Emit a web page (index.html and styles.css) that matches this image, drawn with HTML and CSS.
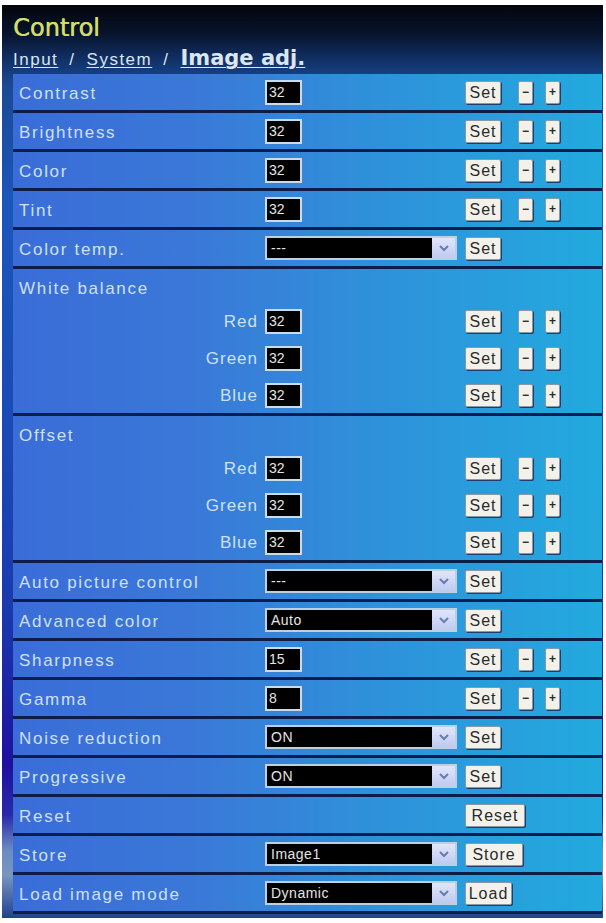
FILE: index.html
```html
<!DOCTYPE html>
<html>
<head>
<meta charset="utf-8">
<link rel="stylesheet" href="styles.css">
</head>
<body>
<div class="page">
  <header class="head">
    <h1 class="title">Control</h1>
    <nav class="crumbs"><a class="crumb">Input</a><span class="sep">/</span><a class="crumb">System</a><span class="sep">/</span><a class="crumb current">Image adj.</a></nav>
  </header>
  <div class="table">
    <div class="row"><span class="label">Contrast</span><span class="field"><span class="num">32</span></span><span class="btns"><span class="btn set">Set</span><span class="btn step">−</span><span class="btn step">+</span></span></div>
    <div class="row"><span class="label">Brightness</span><span class="field"><span class="num">32</span></span><span class="btns"><span class="btn set">Set</span><span class="btn step">−</span><span class="btn step">+</span></span></div>
    <div class="row"><span class="label">Color</span><span class="field"><span class="num">32</span></span><span class="btns"><span class="btn set">Set</span><span class="btn step">−</span><span class="btn step">+</span></span></div>
    <div class="row"><span class="label">Tint</span><span class="field"><span class="num">32</span></span><span class="btns"><span class="btn set">Set</span><span class="btn step">−</span><span class="btn step">+</span></span></div>
    <div class="row"><span class="label">Color temp.</span><span class="field"><span class="select"><span class="sel-val">---</span><span class="sel-arrow"><svg width="10" height="7" viewBox="0 0 10 7"><polyline points="1,1 5,5 9,1" fill="none" stroke="#6a7cae" stroke-width="2"/></svg></span></span></span><span class="btns"><span class="btn set">Set</span></span></div>
    <div class="group">
      <div class="group-head">White balance</div>
      <div class="subrow"><span class="sublabel">Red</span><span class="field"><span class="num">32</span></span><span class="btns"><span class="btn set">Set</span><span class="btn step">−</span><span class="btn step">+</span></span></div>
      <div class="subrow"><span class="sublabel">Green</span><span class="field"><span class="num">32</span></span><span class="btns"><span class="btn set">Set</span><span class="btn step">−</span><span class="btn step">+</span></span></div>
      <div class="subrow"><span class="sublabel">Blue</span><span class="field"><span class="num">32</span></span><span class="btns"><span class="btn set">Set</span><span class="btn step">−</span><span class="btn step">+</span></span></div>
    </div>
    <div class="group">
      <div class="group-head">Offset</div>
      <div class="subrow"><span class="sublabel">Red</span><span class="field"><span class="num">32</span></span><span class="btns"><span class="btn set">Set</span><span class="btn step">−</span><span class="btn step">+</span></span></div>
      <div class="subrow"><span class="sublabel">Green</span><span class="field"><span class="num">32</span></span><span class="btns"><span class="btn set">Set</span><span class="btn step">−</span><span class="btn step">+</span></span></div>
      <div class="subrow"><span class="sublabel">Blue</span><span class="field"><span class="num">32</span></span><span class="btns"><span class="btn set">Set</span><span class="btn step">−</span><span class="btn step">+</span></span></div>
    </div>
    <div class="row"><span class="label">Auto picture control</span><span class="field"><span class="select"><span class="sel-val">---</span><span class="sel-arrow"><svg width="10" height="7" viewBox="0 0 10 7"><polyline points="1,1 5,5 9,1" fill="none" stroke="#6a7cae" stroke-width="2"/></svg></span></span></span><span class="btns"><span class="btn set">Set</span></span></div>
    <div class="row"><span class="label">Advanced color</span><span class="field"><span class="select"><span class="sel-val">Auto</span><span class="sel-arrow"><svg width="10" height="7" viewBox="0 0 10 7"><polyline points="1,1 5,5 9,1" fill="none" stroke="#6a7cae" stroke-width="2"/></svg></span></span></span><span class="btns"><span class="btn set">Set</span></span></div>
    <div class="row"><span class="label">Sharpness</span><span class="field"><span class="num">15</span></span><span class="btns"><span class="btn set">Set</span><span class="btn step">−</span><span class="btn step">+</span></span></div>
    <div class="row"><span class="label">Gamma</span><span class="field"><span class="num">8</span></span><span class="btns"><span class="btn set">Set</span><span class="btn step">−</span><span class="btn step">+</span></span></div>
    <div class="row"><span class="label">Noise reduction</span><span class="field"><span class="select"><span class="sel-val">ON</span><span class="sel-arrow"><svg width="10" height="7" viewBox="0 0 10 7"><polyline points="1,1 5,5 9,1" fill="none" stroke="#6a7cae" stroke-width="2"/></svg></span></span></span><span class="btns"><span class="btn set">Set</span></span></div>
    <div class="row"><span class="label">Progressive</span><span class="field"><span class="select"><span class="sel-val">ON</span><span class="sel-arrow"><svg width="10" height="7" viewBox="0 0 10 7"><polyline points="1,1 5,5 9,1" fill="none" stroke="#6a7cae" stroke-width="2"/></svg></span></span></span><span class="btns"><span class="btn set">Set</span></span></div>
    <div class="row"><span class="label">Reset</span><span class="field"></span><span class="btns"><span class="btn reset">Reset</span></span></div>
    <div class="row"><span class="label">Store</span><span class="field"><span class="select"><span class="sel-val">Image1</span><span class="sel-arrow"><svg width="10" height="7" viewBox="0 0 10 7"><polyline points="1,1 5,5 9,1" fill="none" stroke="#6a7cae" stroke-width="2"/></svg></span></span></span><span class="btns"><span class="btn store">Store</span></span></div>
    <div class="row"><span class="label">Load image mode</span><span class="field"><span class="select"><span class="sel-val">Dynamic</span><span class="sel-arrow"><svg width="10" height="7" viewBox="0 0 10 7"><polyline points="1,1 5,5 9,1" fill="none" stroke="#6a7cae" stroke-width="2"/></svg></span></span></span><span class="btns"><span class="btn load">Load</span></span></div>
  </div>
</div>
</body>
</html>
```

FILE: styles.css
```css
html, body {
  margin: 0;
  padding: 0;
  background: #ffffff;
}

.page {
  margin: 5px 3px 0 2px;
  width: 601px;
  padding-bottom: 4px;
  background: linear-gradient(to bottom,
    #03050c 0px,
    #08152e 30px,
    #133672 60px,
    #1a4a94 80px,
    #1c56bc 200px,
    #1a48b4 450px,
    #1a3aae 600px,
    #1c20a4 700px,
    #1e10a0 760px,
    #2a2aaa 810px,
    #6a8cc0 845px,
    #7896c0 870px,
    #3a5aa0 900px,
    #173a7c 918px);
}

.head {
  padding: 9px 0 4px 11px;
}

.title {
  margin: 0;
  font-family: "DejaVu Sans", sans-serif;
  font-weight: normal;
  font-size: 24px;
  line-height: 28px;
  color: #d2dc68;
  text-shadow: 0.5px 0 0 #d2dc68;
}

.crumbs {
  margin-top: 4px;
  height: 24px;
  line-height: 24px;
  display: flex;
  align-items: baseline;
  color: #dce6ee;
  font-family: "Liberation Sans", sans-serif;
  font-size: 17px;
  letter-spacing: 1.5px;
}

.crumb {
  color: #dce6ee;
  text-decoration: underline;
  text-decoration-thickness: 1px;
  text-underline-offset: 2px;
}

.sep {
  padding: 0 11px 0 11px;
}

.crumb.current {
  font-family: "DejaVu Sans", sans-serif;
  font-weight: bold;
  font-size: 21px;
  letter-spacing: 0;
}

.table {
  margin-left: 11px;
  margin-right: 1px;
  background: #0b1d48;
  display: flex;
  flex-direction: column;
  gap: 3px;
  padding-bottom: 3px;
}

.row, .group {
  background: linear-gradient(to right, #3a6cd8 0%, #3a78d8 30%, #2f90da 60%, #22aade 100%);
}

.row {
  height: 36px;
  display: grid;
  grid-template-columns: 246px 200px 1fr;
  align-items: center;
  padding-left: 6px;
}

.label, .group-head, .sublabel {
  font-family: "Liberation Sans", sans-serif;
  font-size: 17px;
  letter-spacing: 1.7px;
  color: #cfe0f4;
}

.label {
  padding-top: 3px;
}

.group {
  height: 144px;
  padding-top: 6px;
  box-sizing: border-box;
}

.group-head {
  height: 28px;
  line-height: 28px;
  padding-left: 6px;
}

.subrow {
  height: 37px;
  display: grid;
  grid-template-columns: 252px 200px 1fr;
  align-items: center;
}

.sublabel {
  text-align: right;
  padding-right: 7px;
  letter-spacing: 1px;
}

.field {
  display: flex;
  align-items: center;
}

.num {
  box-sizing: border-box;
  width: 37px;
  height: 25px;
  border: 2px solid #c8dcec;
  background: #000;
  color: #e4e4e4;
  font-family: "Liberation Sans", sans-serif;
  font-size: 14px;
  line-height: 21px;
  padding-left: 2px;
}

.select {
  box-sizing: border-box;
  width: 192px;
  height: 24px;
  border: 2px solid #bcd0e4;
  display: flex;
  background: #000;
}

.sel-val {
  flex: 1;
  color: #e4e4e4;
  font-family: "Liberation Sans", sans-serif;
  font-size: 14px;
  line-height: 20px;
  padding-left: 4px;
  letter-spacing: 0.5px;
}

.sel-arrow {
  width: 23px;
  background: linear-gradient(to bottom, #e0e6fa, #c0caf0);
  display: flex;
  align-items: center;
  justify-content: center;
}

.btns {
  display: flex;
  align-items: center;
}

.btn {
  box-sizing: border-box;
  height: 23px;
  background: #f2f2ea;
  border: 1px solid #8a98a8;
  border-radius: 2px;
  box-shadow: 1px 1px 0 #1f3e6e;
  color: #2a2a2a;
  font-family: "Liberation Sans", sans-serif;
  font-size: 16px;
  line-height: 21px;
  letter-spacing: 1px;
  text-align: center;
}

.set {
  width: 36px;
  margin-right: 17px;
}

.step {
  width: 15px;
  margin-right: 12px;
  font-size: 12px;
  font-weight: bold;
  letter-spacing: 0;
}

.reset {
  width: 60px;
}

.store {
  width: 58px;
}

.load {
  width: 47px;
}
```
